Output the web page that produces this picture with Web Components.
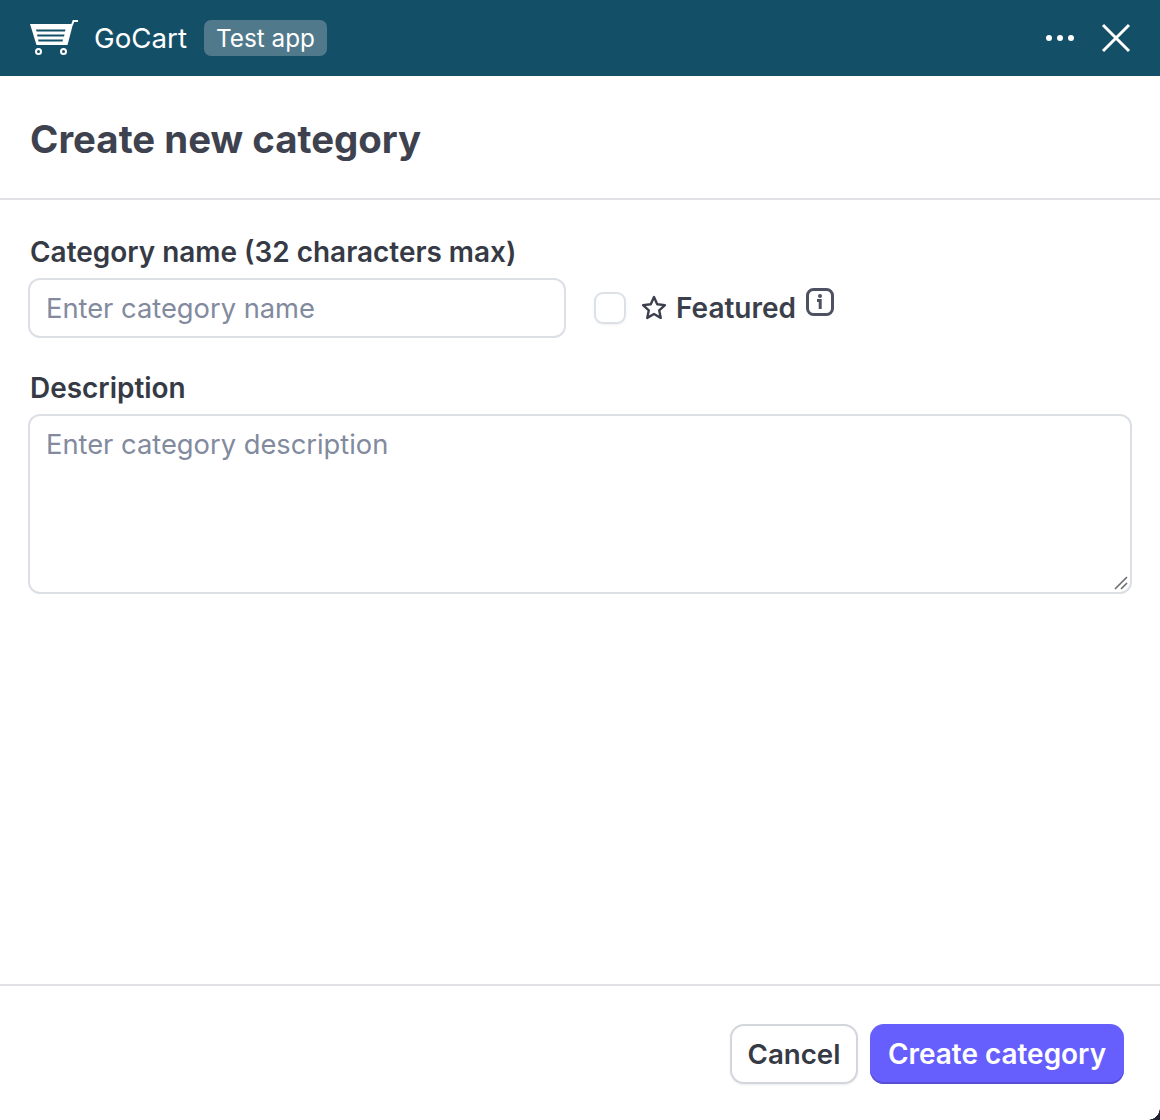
<!DOCTYPE html>
<html><head><meta charset="utf-8"><style>
html,body{margin:0;padding:0;background:#fff;}
body{width:1160px;height:1120px;overflow:hidden;font-family:Inter,"Liberation Sans",sans-serif;}
</style></head><body>
<app-window>
  <app-topbar slot="top"></app-topbar>
  <page-title slot="title">Create new category</page-title>
  <category-form slot="body"></category-form>
  <form-footer slot="foot"></form-footer>
</app-window>
<script>
function def(name,html){customElements.define(name,class extends HTMLElement{constructor(){super();this.attachShadow({mode:'open'}).innerHTML=html;}});}
def('app-window',`<style>
:host{display:flex;flex-direction:column;width:1160px;height:1120px;background:#fff;position:relative;overflow:hidden}
.grow{flex:1;min-height:0}
.corner{position:absolute;right:0;bottom:0;width:12px;height:12px;background:radial-gradient(circle at 0 0,transparent 11.5px,#1f2430 12px)}
</style><slot name="top"></slot><slot name="title"></slot><div class="grow"><slot name="body"></slot></div><slot name="foot"></slot><div class="corner"></div>`);
def('app-topbar',`<style>
:host{display:flex;align-items:center;height:76px;box-sizing:border-box;padding:0 29px 0 30px;background:#144f68;color:#fff;font:400 27.7px/1 Inter,sans-serif}
svg{display:block;flex:none}
.name{margin-left:16px;margin-top:2px}
.tag{margin-left:17px;background:#50798b;border-radius:7px;font-size:24.3px;height:36px;line-height:37px;padding:0 12px;box-sizing:border-box}
.sp{flex:1}
.x{margin-left:26px}
</style>
<svg width="48" height="38" viewBox="0 0 48 38"><path d="M0 5H43L37.5 26H6.5Z" fill="#fff"/><path d="M6 10.5H35.5L35 12.5H6.5ZM7 15.5H34.5L34 17.5H7.5ZM8 20.5H33L32.5 22.5H8.5Z" fill="#144f68"/><path d="M42 6L43.5 2H48" fill="none" stroke="#fff" stroke-width="2"/><circle cx="8.5" cy="32.5" r="2.5" fill="none" stroke="#fff" stroke-width="2"/><circle cx="33.5" cy="32.5" r="2.5" fill="none" stroke="#fff" stroke-width="2"/></svg>
<span class="name">GoCart</span><span class="tag">Test app</span><span class="sp"></span>
<svg width="30" height="8" viewBox="0 0 30 8"><circle cx="4" cy="4" r="3" fill="#fff"/><circle cx="15" cy="4" r="3" fill="#fff"/><circle cx="26" cy="4" r="3" fill="#fff"/></svg>
<svg class="x" width="30" height="30" viewBox="0 0 30 30"><path d="M2 2L28 28M28 2L2 28" stroke="#fff" stroke-width="3" fill="none"/></svg>`);
def('page-title',`<style>
:host{display:block;height:124px;box-sizing:border-box;padding:41px 30px 0;border-bottom:2px solid #e0e2e6;color:#3e424f;font:700 38.4px/44px Inter,sans-serif}
</style><slot></slot>`);
def('text-field',`<style>
:host{display:block;box-sizing:border-box;border:2px solid #dcdfe6;border-radius:12px;background:#fff;color:#828a9e;font:400 27.3px/1 Inter,sans-serif;padding:15px 16px;position:relative}
</style><slot></slot>`);
def('field-label',`<style>
:host{display:block;color:#363a45;font:600 27.95px/32px Inter,sans-serif}
</style><slot></slot>`);
def('category-form',`<style>
:host{display:block;padding:36px 28px 0}
field-label{padding-left:2px}
.row{display:flex;align-items:center;margin-top:10px}
.name{width:538px;height:60px}
.cb{width:32px;height:32px;box-sizing:border-box;border:2px solid #dce1e8;border-radius:9px;margin-left:28px;box-shadow:0 1px 2px rgba(60,70,90,.08)}
.star{margin-left:15px;display:block}
.feat{margin-left:9px;color:#3b3f4b;font:600 28px/32px Inter,sans-serif}
.info{margin-left:10px;display:block;position:relative;top:-6px}
.desc{height:180px;margin-top:10px}
.second{margin-top:34px}
.grip{position:absolute;right:1px;bottom:1px;display:block}
</style>
<field-label>Category name (32 characters max)</field-label>
<div class="row"><text-field class="name">Enter category name</text-field><div class="cb"></div>
<svg class="star" width="26" height="26" viewBox="0.5 0.5 25 25"><path d="M13 2.5l3.1 6.9 7.4.8-5.5 5 1.5 7.3-6.5-3.7-6.5 3.7 1.5-7.3-5.5-5 7.4-.8z" fill="none" stroke="#3b3f4b" stroke-width="2.3" stroke-linejoin="round"/></svg>
<span class="feat">Featured</span>
<svg class="info" width="28" height="28" viewBox="0 0 28 28"><rect x="1.5" y="1.5" width="25" height="25" rx="6" fill="none" stroke="#4d5162" stroke-width="3"/><circle cx="14" cy="8" r="2" fill="#4d5162"/><path d="M11 12.5h3.2V21" fill="none" stroke="#4d5162" stroke-width="3"/></svg></div>
<field-label class="second">Description</field-label>
<text-field class="desc">Enter category description<svg class="grip" width="16" height="16" viewBox="0 0 16 16"><path d="M2 14L14 2M8 14L14 8" stroke="#6d6d6d" stroke-width="1.6" fill="none"/></svg></text-field>`);
def('app-button',`<style>
:host{display:block;box-sizing:border-box;height:60px;border-radius:14px;font:600 27.7px/56px Inter,sans-serif;text-align:center}
:host([kind=plain]){width:128px;border:2px solid #d3d6dc;color:#363a45;background:#fff;box-shadow:0 1px 2px rgba(60,70,90,.1)}
:host([kind=primary]){width:254px;font-size:27.95px;line-height:60px;color:#fff;background:#665ffd;box-shadow:inset 0 -2px 0 #564fd6}
</style><slot></slot>`);
def('form-footer',`<style>
:host{display:flex;justify-content:flex-end;gap:12px;height:136px;box-sizing:border-box;padding:38px 36px 0 0;border-top:2px solid #e0e2e6}
</style><app-button kind="plain">Cancel</app-button><app-button kind="primary">Create category</app-button>`);
</script>
</body></html>
